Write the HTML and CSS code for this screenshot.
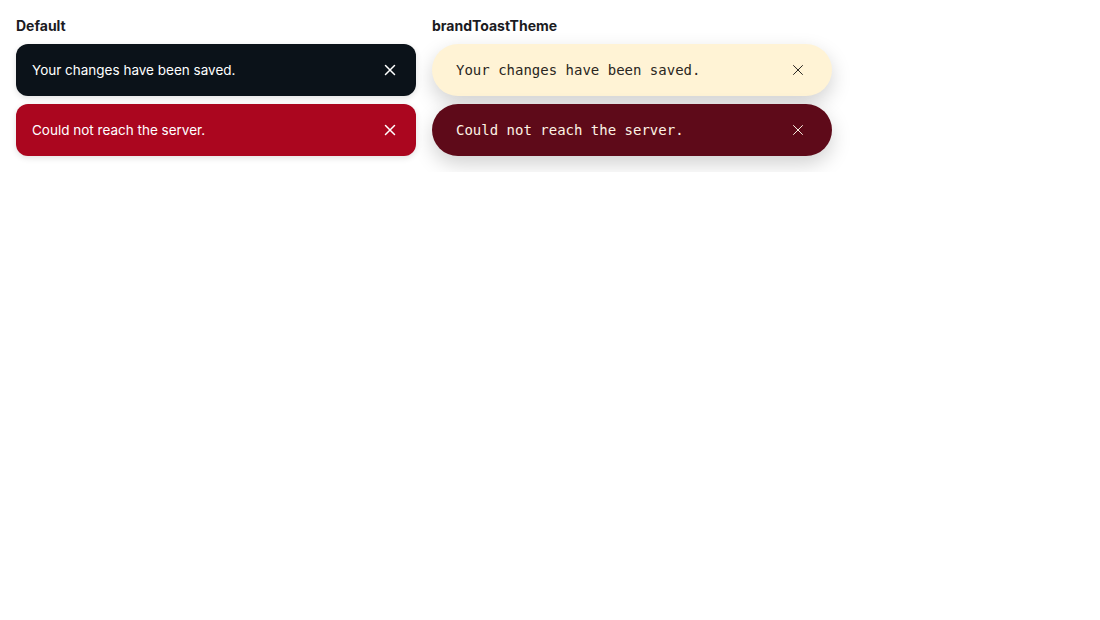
FILE: index.html
```html
<!DOCTYPE html>
<html>
<head>
<meta charset="utf-8">
<link rel="stylesheet" href="styles.css">
</head>
<body>
<div class="page">
  <section class="col">
    <h2 class="title">Default</h2>
    <div class="toast toast-default toast-neutral">
      <span class="msg">Your changes have been saved.</span>
      <button class="close"><svg width="12" height="12" viewBox="0 0 12 12"><path d="M1.5 1.5L10.5 10.5M10.5 1.5L1.5 10.5" stroke="currentColor" stroke-width="1.5" stroke-linecap="round"/></svg></button>
    </div>
    <div class="toast toast-default toast-error">
      <span class="msg">Could not reach the server.</span>
      <button class="close"><svg width="12" height="12" viewBox="0 0 12 12"><path d="M1.5 1.5L10.5 10.5M10.5 1.5L1.5 10.5" stroke="currentColor" stroke-width="1.5" stroke-linecap="round"/></svg></button>
    </div>
  </section>
  <section class="col">
    <h2 class="title">brandToastTheme</h2>
    <div class="toast toast-brand brand-neutral">
      <span class="msg">Your changes have been saved.</span>
      <button class="close"><svg width="12" height="12" viewBox="0 0 12 12"><path d="M1.5 1.5L10.5 10.5M10.5 1.5L1.5 10.5" stroke="currentColor" stroke-width="1" stroke-linecap="round"/></svg></button>
    </div>
    <div class="toast toast-brand brand-error">
      <span class="msg">Could not reach the server.</span>
      <button class="close"><svg width="12" height="12" viewBox="0 0 12 12"><path d="M1.5 1.5L10.5 10.5M10.5 1.5L1.5 10.5" stroke="currentColor" stroke-width="1" stroke-linecap="round"/></svg></button>
    </div>
  </section>
</div>
</body>
</html>
```
FILE: styles.css
```css
* { box-sizing: border-box; }
html, body { margin: 0; padding: 0; background: #ffffff; }
body { font-family: Inter, "Liberation Sans", sans-serif; }
.page {
  display: flex;
  gap: 16px;
  padding: 16px;
}
.col {
  width: 400px;
  display: flex;
  flex-direction: column;
  gap: 8px;
}
.title {
  margin: 0;
  font-size: 14px;
  line-height: 20px;
  font-weight: 700;
  color: #1b1b1f;
}
.toast {
  height: 52px;
  display: flex;
  align-items: center;
  justify-content: space-between;
  font-size: 14px;
}
.close {
  width: 20px;
  height: 20px;
  padding: 0;
  border: 0;
  background: transparent;
  color: inherit;
  display: flex;
  align-items: center;
  justify-content: center;
}
.toast-default {
  padding: 0 16px;
  border-radius: 12px;
  color: #ffffff;
  font-size: 13.5px;
  box-shadow: 0 2px 6px rgba(0,0,0,0.12);
}
.toast-neutral { background: #0b1219; }
.toast-error { background: #ab061f; }
.toast-brand {
  padding: 0 24px;
  border-radius: 26px;
  font-family: "DejaVu Sans Mono", "Liberation Mono", monospace;
  font-size: 14px;
  box-shadow: 0 8px 20px rgba(0,0,0,0.18);
}
.brand-neutral { background: #fff3d5; color: #2a2621; }
.brand-error { background: #5e0a19; color: #fdf2e4; }
```
